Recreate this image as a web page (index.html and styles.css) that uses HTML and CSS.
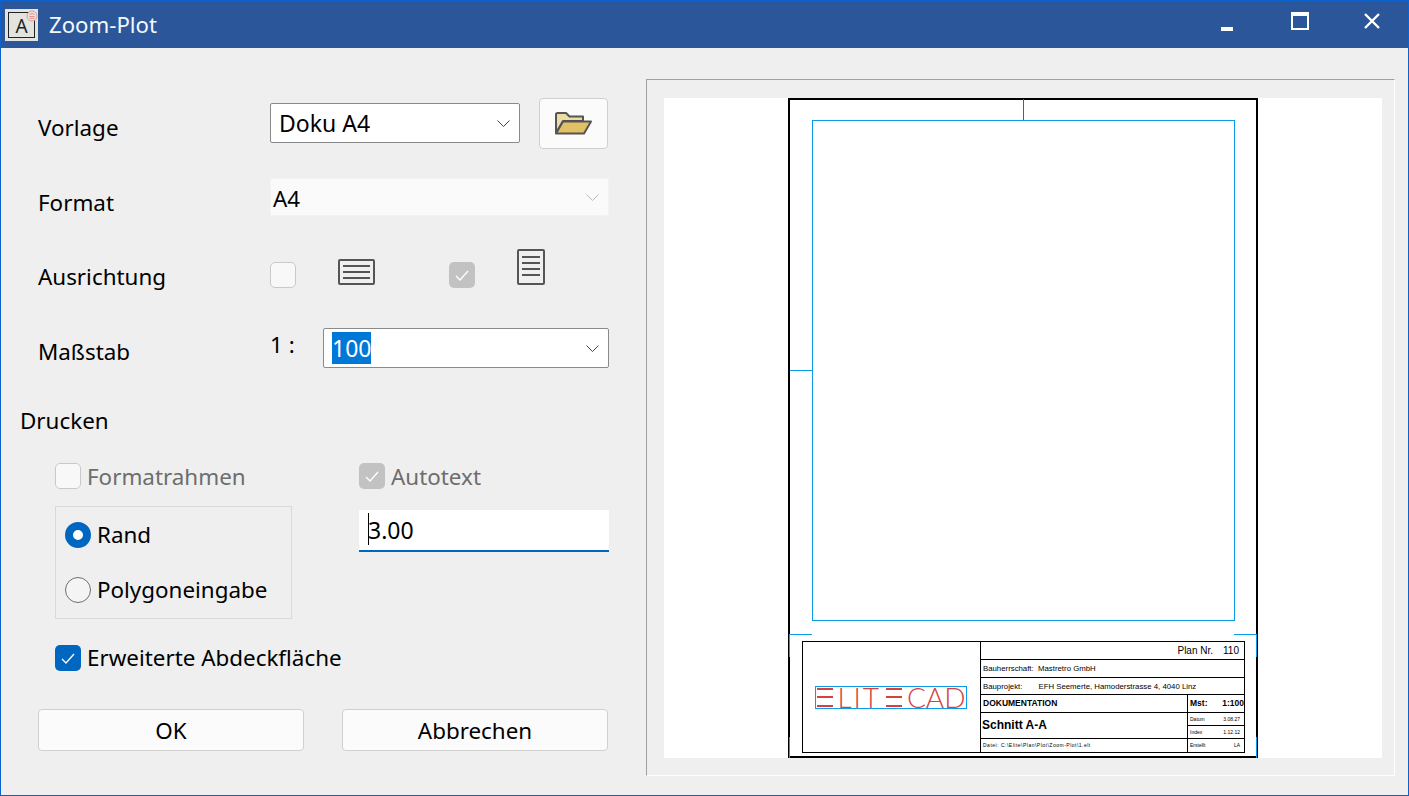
FILE: index.html
```html
<!DOCTYPE html>
<html lang="de">
<head>
    <title>Zoom-Plot</title>
    <meta name="viewport" content="width=device-width, initial-scale=1.0">
    <link rel="stylesheet" href="styles.css">
</head>
<body>
<div class="dialog">

    <!-- Title bar -->
    <div class="titlebar">
        <div class="app-icon">
            <span class="app-icon-frame">A</span>
            <svg class="app-icon-badge" viewBox="0 0 12 12" width="12" height="12">
                <circle cx="6" cy="6" r="5" fill="#e6e2de" stroke="#e59a93"/>
                <path d="M3.500 4.500l2.500-1 2.500 1M3.500 6.500h5M3.500 8l2.500 .5 2.500-.5" fill="none" stroke="#dd7d76" stroke-width=".8"/>
            </svg>
        </div>
        <span class="title-text">Zoom-Plot</span>
        <div class="win-buttons">
            <span class="win-min"></span>
            <span class="win-max"></span>
            <svg class="win-close" viewBox="0 0 16 16" width="16" height="16">
                <path d="M1 1l14 14M15 1L1 15" stroke="#fff" stroke-width="2.400"/>
            </svg>
        </div>
    </div>

    <div class="content">

        <!-- Left form -->
        <div class="form">
            <div class="row row-vorlage">
                <label class="row-label">Vorlage</label>
                <div class="combo combo-vorlage">
                    <span>Doku A4</span>
                    <svg class="chevron" viewBox="0 0 13 7" width="13" height="7"><path d="M.5 .5l6 6 6-6" fill="none" stroke="#444"/></svg>
                </div>
                <button class="btn-folder">
                    <svg viewBox="0 0 37 23" width="37" height="23">
                        <path d="M1 21V2.500Q1 1 2.500 1H11l3.500 3.500H28V9H8L1 21z" fill="#efdca4" stroke="#555" stroke-width="2" stroke-linejoin="round"/>
                        <path d="M1 21.500L8 9.500h28l-7 12z" fill="#e2c064" stroke="#555" stroke-width="2" stroke-linejoin="round"/>
                    </svg>
                </button>
            </div>

            <div class="row row-format">
                <label class="row-label">Format</label>
                <div class="combo combo-format">
                    <span>A4</span>
                    <svg class="chevron" viewBox="0 0 13 7" width="13" height="7"><path d="M.5 .5l6 6 6-6" fill="none" stroke="#bbb"/></svg>
                </div>
            </div>

            <div class="row row-ausrichtung">
                <label class="row-label">Ausrichtung</label>
                <span class="check check-off"></span>
                <svg class="icon-landscape" viewBox="0 0 37 26" width="37" height="26">
                    <rect x="1" y="1" width="35" height="24" rx="1" fill="none" stroke="#555" stroke-width="2"/>
                    <path d="M5 7h27M5 13h27M5 19h27" stroke="#555" stroke-width="2"/>
                </svg>
                <span class="check check-disabled">
                    <svg viewBox="0 0 14 11" width="14" height="11"><path d="M1 6l4 4 8-9" fill="none" stroke="#fff" stroke-width="1.300"/></svg>
                </span>
                <svg class="icon-portrait" viewBox="0 0 28 36" width="28" height="36">
                    <rect x="1" y="1" width="26" height="34" rx="1" fill="none" stroke="#555" stroke-width="2"/>
                    <path d="M5 8h18M5 14h18M5 20h18M5 26h18" stroke="#555" stroke-width="2"/>
                </svg>
            </div>

            <div class="row row-massstab">
                <label class="row-label">Maßstab</label>
                <span class="ratio">1 :</span>
                <div class="combo combo-massstab">
                    <span class="selected">100</span>
                    <svg class="chevron" viewBox="0 0 13 7" width="13" height="7"><path d="M.5 .5l6 6 6-6" fill="none" stroke="#444"/></svg>
                </div>
            </div>

            <div class="section-label">Drucken</div>

            <div class="print-options">
                <div class="print-left">
                    <div class="option disabled">
                        <span class="check check-off"></span>
                        <span>Formatrahmen</span>
                    </div>
                    <div class="radio-box">
                        <div class="option">
                            <span class="radio radio-on"></span>
                            <span>Rand</span>
                        </div>
                        <div class="option">
                            <span class="radio"></span>
                            <span>Polygoneingabe</span>
                        </div>
                    </div>
                </div>
                <div class="print-right">
                    <div class="option disabled">
                        <span class="check check-disabled">
                            <svg viewBox="0 0 14 11" width="14" height="11"><path d="M1 6l4 4 8-9" fill="none" stroke="#fff" stroke-width="1.300"/></svg>
                        </span>
                        <span>Autotext</span>
                    </div>
                    <div class="text-input"><span class="caret-text">3.00</span></div>
                </div>
            </div>

            <div class="option option-extended">
                <span class="check check-on">
                    <svg viewBox="0 0 14 11" width="14" height="11"><path d="M1 6l4 4 8-9" fill="none" stroke="#fff" stroke-width="1.300"/></svg>
                </span>
                <span>Erweiterte Abdeckfläche</span>
            </div>

            <div class="actions">
                <button class="btn">OK</button>
                <button class="btn">Abbrechen</button>
            </div>
        </div>

        <!-- Plot preview -->
        <div class="preview">
            <div class="paper">
                <div class="sheet">
                    <div class="zoom-frame"></div>
                    <span class="tick tick-top"></span>
                    <span class="tick tick-left"></span>
                    <span class="tick tick-bl"></span>
                    <span class="tick tick-br"></span>
                    <span class="edge edge-l1"></span>
                    <span class="edge edge-l2"></span>
                    <span class="edge edge-r1"></span>
                    <span class="edge edge-r2"></span>

                    <div class="title-block">
                        <div class="tb-logo">
                            <div class="logo">
                                <span class="logo-e"></span><span class="logo-lit">LIT</span><span class="logo-e"></span><span>CAD</span>
                            </div>
                        </div>
                        <div class="tb-info">
                            <div class="tb-row tb-plan"><span>Plan Nr.</span><span class="tb-num">110</span></div>
                            <div class="tb-row">Bauherrschaft: &nbsp;Mastretro GmbH</div>
                            <div class="tb-row tb-project"><span>Bauprojekt:</span><span>EFH Seemerte, Hamoderstrasse 4, 4040 Linz</span></div>
                            <div class="tb-main">
                                <div class="tb-col">
                                    <div class="tb-doc">DOKUMENTATION</div>
                                    <div class="tb-name">Schnitt A-A</div>
                                    <div class="tb-file">Datei: C:\Elite\Plan\Plot\Zoom-Plot\1.elt</div>
                                </div>
                                <div class="tb-side">
                                    <div class="tb-mst"><span>Mst:</span><span>1:100</span></div>
                                    <div class="tb-small"><span>Datum</span><span>3.08.27</span></div>
                                    <div class="tb-small"><span>Index</span><span>1.12.12</span></div>
                                    <div class="tb-small"><span>Erstellt</span><span>LA</span></div>
                                </div>
                            </div>
                        </div>
                    </div>
                </div>
            </div>
        </div>

    </div>
</div>
</body>
</html>
```

FILE: styles.css
```css
* {
    box-sizing: border-box;
}

body {
    margin: 0;
    background: #efefef;
    color: #000;
    font-family: 'Noto Sans', 'Open Sans', sans-serif;
    font-size: 22.4px;
    overflow: hidden;
}

.dialog {
    width: 1409px;
    height: 796px;
    border: 1px solid #0b62cc;
    display: flex;
    flex-direction: column;
}

/* Title bar */
.titlebar {
    height: 47px;
    flex: none;
    background: #2b579a;
    display: flex;
    align-items: center;
    padding-left: 4px;
    color: #fff;
}

.app-icon {
    width: 33px;
    height: 32px;
    background: #e3e3df;
    position: relative;
    padding: 3px;
}

.app-icon-frame {
    display: flex;
    width: 27px;
    height: 26px;
    border: 1px solid #222;
    align-items: center;
    justify-content: center;
    color: #222;
    font-size: 19px;
    line-height: 1;
    padding-top: 3px;
}

.app-icon-badge {
    position: absolute;
    top: 1px;
    right: 0;
}

.title-text {
    margin-left: 11px;
    font-size: 22.2px;
    color: #f5f8fc;
}

.win-buttons {
    margin-left: auto;
    display: flex;
    align-items: center;
    height: 100%;
}

.win-min {
    width: 12px;
    height: 4px;
    background: #fff;
    margin-top: 9px;
    margin-right: 58px;
}

.win-max {
    width: 18px;
    height: 18px;
    border: 2px solid #fff;
    border-top-width: 4px;
    margin-top: -8px;
    margin-right: 55px;
}

.win-close {
    margin-top: -8px;
    margin-right: 28px;
}

.content {
    flex: 1;
    display: flex;
    min-height: 0;
}

/* Left form */
.form {
    width: 645px;
    flex: none;
    padding: 50px 0 0 37px;
}

.row {
    display: flex;
    align-items: flex-start;
}

.row-label {
    width: 232px;
    flex: none;
    line-height: 30px;
}

.row-vorlage {
    height: 51px;
}

.row-vorlage .row-label {
    margin-top: 15px;
}

.combo {
    display: flex;
    align-items: center;
    justify-content: space-between;
    background: #fff;
    border: 1px solid #8a8a8a;
    border-radius: 2px;
    padding-right: 9px;
    padding-left: 8px;
}

.combo-vorlage {
    width: 250px;
    height: 40px;
    margin-top: 5px;
    font-size: 23px;
}

.btn-folder {
    width: 69px;
    height: 51px;
    margin-left: 19px;
    padding: 0 1px 0 0;
    background: #fbfbfb;
    border: 1px solid #cfcfcf;
    border-radius: 4px;
    display: flex;
    align-items: center;
    justify-content: center;
}

.row-format {
    height: 38px;
    margin-top: 29px;
}

.row-format .row-label {
    margin-top: 10px;
}

.combo-format {
    width: 339px;
    height: 38px;
    background: #fafafa;
    border-color: #f3f3f3;
    padding-left: 2px;
}

.combo-format span {
    padding-top: 2px;
}

.row-ausrichtung {
    height: 40px;
    margin-top: 33px;
}

.row-ausrichtung .row-label {
    margin-top: 13px;
}

.check {
    width: 26px;
    height: 26px;
    flex: none;
    border-radius: 5px;
    display: flex;
    align-items: center;
    justify-content: center;
}

.check-off {
    background: #f8f8f8;
    border: 1px solid #c9c9c9;
}

.check-disabled {
    background: #c2c2c2;
}

.check-on {
    background: #0067c0;
}

.row-ausrichtung .check {
    margin-top: 13px;
}

.icon-landscape {
    margin: 10px 74px 0 42px;
    flex: none;
}

.icon-portrait {
    margin-left: 42px;
    flex: none;
}

.row-massstab {
    height: 40px;
    margin-top: 39px;
}

.row-massstab .row-label {
    margin-top: 9px;
}

.ratio {
    width: 53px;
    flex: none;
    line-height: 34px;
}

.combo-massstab {
    width: 286px;
    height: 40px;
    font-size: 23px;
}

.selected {
    background: #0078d7;
    color: #fff;
    line-height: 32px;
}

.section-label {
    margin: 38px 0 0 -18px;
    line-height: 30px;
}

.print-options {
    display: flex;
    margin-top: 27px;
    margin-left: 17px;
}

.print-left {
    width: 304px;
    flex: none;
}

.option {
    display: flex;
    align-items: center;
    gap: 6px;
    height: 26px;
}

.disabled {
    color: #6d6d6d;
}

.radio-box {
    width: 237px;
    height: 113px;
    margin-top: 17px;
    border: 1px solid #d9d9d9;
    padding: 15px 0 0 9px;
    display: flex;
    flex-direction: column;
    gap: 29px;
}

.radio-box .option span:last-child {
    padding-bottom: 1px;
}

.radio {
    width: 26px;
    height: 26px;
    flex: none;
    border-radius: 50%;
    border: 1px solid #6f6f6f;
    background: #f4f4f4;
}

.radio-on {
    border: 8px solid #0067c0;
    background: #fff;
}

.print-right {
    width: 250px;
    flex: none;
}

.text-input {
    width: 250px;
    height: 42px;
    margin-top: 21px;
    background: #fff;
    border-bottom: 2px solid #0067c0;
    padding-left: 9px;
    line-height: 40px;
    font-size: 23px;
}

.caret-text {
    position: relative;
}

.caret-text::before {
    content: "";
    position: absolute;
    left: 0;
    top: -1px;
    height: 32px;
    width: 1px;
    background: #000;
}

.option-extended {
    margin: 26px 0 0 17px;
}

.option-extended span:last-child {
    padding-bottom: 1px;
}

.actions {
    display: flex;
    gap: 38px;
    margin-top: 38px;
}

.btn {
    width: 266px;
    height: 42px;
    padding: 1px 0 0;
    background: #fbfbfb;
    border: 1px solid #d0d0d0;
    border-radius: 4px;
    color: #000;
    font-family: inherit;
    font-size: inherit;
}

/* Plot preview */
.preview {
    width: 749px;
    height: 697px;
    margin-top: 31px;
    border: 1px solid;
    border-color: #a0a0a0 #fff #fff #a0a0a0;
    padding: 18px 12px 17px 17px;
}

.paper {
    width: 718px;
    height: 660px;
    background: #fff;
    padding-left: 124px;
}

.sheet {
    width: 470px;
    height: 660px;
    border: 2px solid #000;
    position: relative;
    font-family: 'Liberation Sans', Arial, sans-serif;
    font-size: 7.800px;
}

.zoom-frame {
    position: absolute;
    left: 22px;
    top: 20px;
    width: 423px;
    height: 501px;
    border: 1px solid #0a9be8;
}

.tick {
    position: absolute;
    background: #0a9be8;
}

.tick-top {
    left: 233px;
    top: -1px;
    width: 1px;
    height: 21px;
    background: #1c6f9e;
}

.tick-left {
    left: 0;
    top: 270px;
    width: 22px;
    height: 1px;
}

.tick-bl {
    left: -1px;
    top: 534px;
    width: 23px;
    height: 1px;
}

.tick-br {
    left: 444px;
    top: 534px;
    width: 23px;
    height: 1px;
}

.edge {
    position: absolute;
    width: 1px;
    background: #0a9be8;
}

.edge-l1,
.edge-l2 {
    left: -1px;
}

.edge-r1,
.edge-r2 {
    left: 466px;
}

.edge-l1,
.edge-r1 {
    top: 534px;
    height: 23px;
}

.edge-l2,
.edge-r2 {
    top: 637px;
    height: 21px;
}

/* Title block of the sheet */
.title-block {
    position: absolute;
    left: 12px;
    top: 541px;
    width: 443px;
    height: 112px;
    border: 1px solid #000;
    display: flex;
}

.tb-logo {
    width: 178px;
    flex: none;
    border-right: 1px solid #000;
    display: flex;
    align-items: center;
    justify-content: center;
    padding-right: 2px;
}

.logo {
    width: 152px;
    height: 23px;
    border: 1px solid #0a9be8;
    display: flex;
    align-items: center;
    justify-content: space-between;
    padding-left: 1px;
    color: #d8403c;
    font-family: 'Lato', sans-serif;
    font-size: 28px;
    font-weight: 300;
    line-height: 34px;
    white-space: nowrap;
}

.logo-lit {
    letter-spacing: 2px;
}

.logo-e {
    width: 16px;
    height: 19px;
    flex: none;
    background: linear-gradient(#d8403c 2px, transparent 2px, transparent 8px, #d8403c 8px, #d8403c 10px, transparent 10px, transparent 17px, #d8403c 17px);
}

.tb-info {
    flex: 1;
    display: flex;
    flex-direction: column;
    min-width: 0;
}

.tb-row {
    height: 18px;
    flex: none;
    border-bottom: 1px solid #000;
    padding-left: 2px;
    line-height: 17px;
    white-space: nowrap;
}

.tb-plan {
    display: flex;
    justify-content: flex-end;
    gap: 10px;
    font-size: 10px;
    padding-right: 5px;
}

.tb-project {
    height: 17px;
    display: flex;
    gap: 16px;
}

.tb-main {
    flex: 1;
    display: flex;
}

.tb-col {
    flex: 1;
    display: flex;
    flex-direction: column;
}

.tb-doc {
    height: 18px;
    border-bottom: 1px solid #000;
    padding-left: 2px;
    font-weight: bold;
    line-height: 17px;
    font-size: 8.500px;
}

.tb-name {
    height: 26px;
    border-bottom: 1px solid #000;
    padding-left: 1px;
    font-weight: bold;
    font-size: 12px;
    line-height: 25px;
}

.tb-file {
    padding-left: 2px;
    font-size: 5px;
    letter-spacing: .5px;
    line-height: 12px;
    white-space: nowrap;
}

.tb-side {
    width: 57px;
    flex: none;
    border-left: 1px solid #000;
}

.tb-mst {
    height: 18px;
    border-bottom: 1px solid #000;
    display: flex;
    justify-content: space-between;
    padding: 0 0 0 2px;
    font-weight: bold;
    font-size: 8.500px;
    line-height: 17px;
    white-space: nowrap;
}

.tb-small {
    height: 13px;
    border-bottom: 1px solid #000;
    display: flex;
    justify-content: space-between;
    padding: 0 4px 0 2px;
    font-size: 5px;
    line-height: 12px;
}

.tb-small:last-child {
    border-bottom: none;
}
```
